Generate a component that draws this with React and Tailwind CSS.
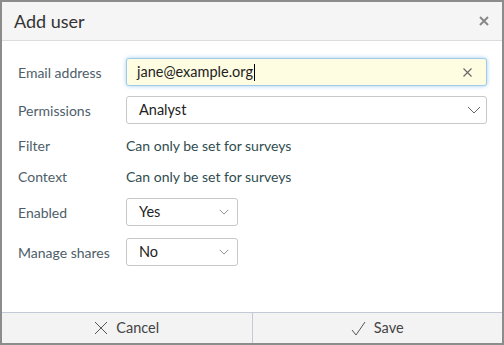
import React, { useState } from "react";

const Chevron = ({ size = 14 }) => (
  <svg width={size} height={size / 2 + 1} viewBox="0 0 14 8" fill="none" stroke="#666" strokeWidth="1">
    <path d="M1 1l6 6 6-6" />
  </svg>
);

const Row = ({ label, children }) => (
  <div className="flex min-h-[20px] items-center">
    <div className="w-[108px] shrink-0 text-[14px] text-[#4d5e6a]">{label}</div>
    <div className="flex-1">{children}</div>
  </div>
);

const Select = ({ value, wide }) => (
  <div
    className={`flex h-[28px] items-center justify-between rounded-[3px] border border-[#c8c8c8] bg-white pl-[12px] text-[14.5px] text-[#222] ${
      wide ? "w-full pr-[5px]" : "w-[112px] pr-[8px]"
    }`}
  >
    <span>{value}</span>
    {wide ? <Chevron size={14} /> : <Chevron size={10} />}
  </div>
);

const App = () => {
  const [email] = useState("jane@example.org");

  return (
    <div
      className="flex h-[345px] w-[504px] flex-col border-2 border-[#8c8c8c] bg-white"
      style={{ fontFamily: "Lato, 'Open Sans', sans-serif" }}
    >
      {/* Header */}
      <div className="flex h-[39px] shrink-0 items-center justify-between border-b border-[#dcdcdc] bg-[#f5f5f5] pl-[12px] pr-[13px]">
        <h1 className="text-[18px] text-[#333]">Add user</h1>
        <svg width="10" height="10" viewBox="0 0 10 10" stroke="#888" strokeWidth="2">
          <path d="M1 1l8 8M9 1l-8 8" />
        </svg>
      </div>

      {/* Body */}
      <div className="flex flex-1 flex-col pl-[16px] pr-[15px] pt-[17px]">
        <Row label="Email address">
          <div className="flex h-[28px] items-center justify-between rounded-[3px] border border-[#9fcbea] bg-[#fffde1] pl-[10px] pr-[14px] text-[14.5px] text-[#222] shadow-[0_0_4px_rgba(102,175,233,0.6)]">
            <span className="flex items-center">
              {email}
              <span className="ml-[1px] inline-block h-[17px] w-[1px] bg-black" />
            </span>
            <svg width="9" height="9" viewBox="0 0 9 9" stroke="#666" strokeWidth="1.1">
              <path d="M0.5 0.5l8 8M8.5 0.5l-8 8" />
            </svg>
          </div>
        </Row>
        <div className="mt-[10px]">
          <Row label="Permissions">
            <Select value="Analyst" wide />
          </Row>
        </div>
        <div className="mt-[9px]">
          <Row label="Filter">
            <span className="text-[14px] text-[#2f4d4f]">Can only be set for surveys</span>
          </Row>
        </div>
        <div className="mt-[7px]">
          <Row label="Context">
            <span className="text-[14px] text-[#2f4d4f]">Can only be set for surveys</span>
          </Row>
        </div>
        <div className="mt-[10px]">
          <Row label="Enabled">
            <Select value="Yes" />
          </Row>
        </div>
        <div className="mt-[12px]">
          <Row label="Manage shares">
            <Select value="No" />
          </Row>
        </div>
      </div>

      {/* Footer */}
      <div className="flex h-[31px] shrink-0 border-t border-[#c3cad6] bg-[#f3f3f3] text-[14.5px] text-[#444]">
        <button className="flex flex-1 items-center justify-center gap-[8px] border-r border-[#c3cad6]">
          <svg width="14" height="14" viewBox="0 0 14 14" stroke="#555" strokeWidth="1">
            <path d="M1 1l12 12M13 1L1 13" />
          </svg>
          Cancel
        </button>
        <button className="flex flex-1 items-center justify-center gap-[8px]">
          <svg width="15" height="15" viewBox="0 0 15 15" fill="none" stroke="#555" strokeWidth="1">
            <path d="M1 9l4 5L14 1" />
          </svg>
          Save
        </button>
      </div>
    </div>
  );
};

export default App;
